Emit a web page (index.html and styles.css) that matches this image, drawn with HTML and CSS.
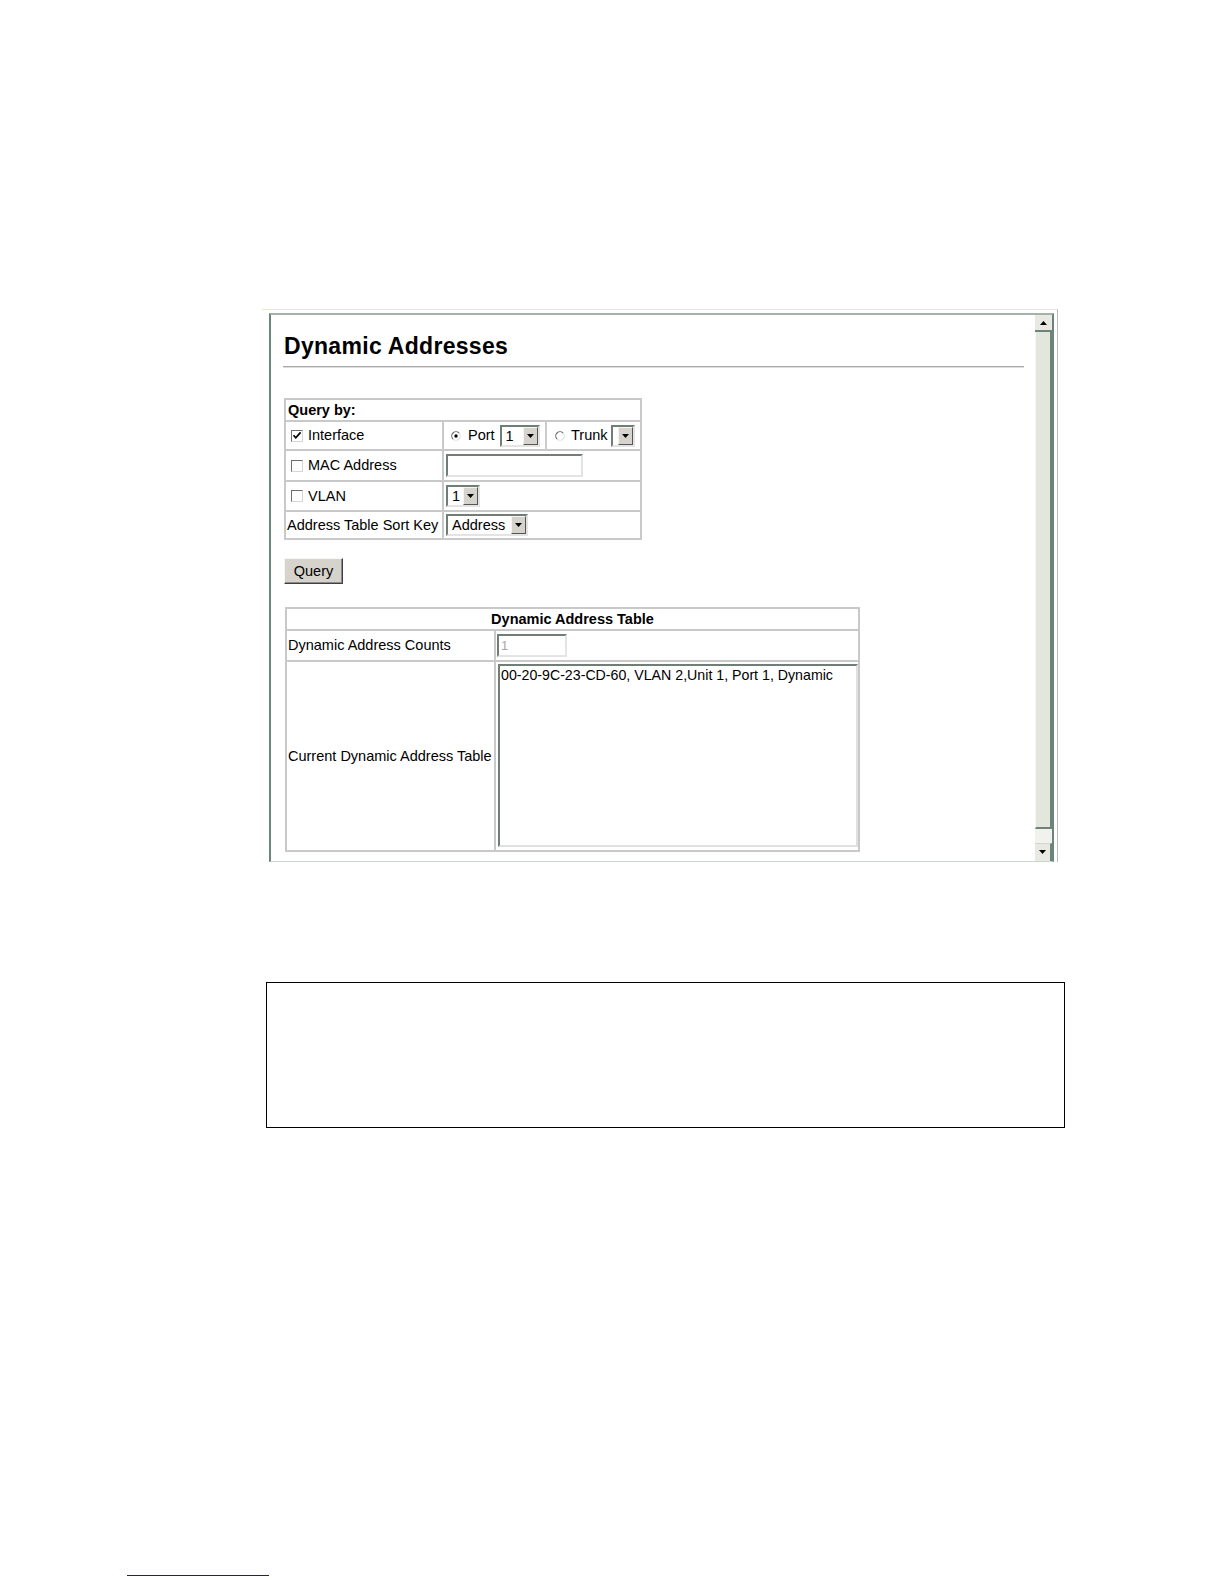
FILE: index.html
```html
<!DOCTYPE html>
<html>
<head>
<meta charset="utf-8">
<title>Dynamic Addresses</title>
<link rel="stylesheet" href="styles.css">
</head>
<body>
<div class="window">
  <div class="frame">
    <div class="content">
      <h1 class="title">Dynamic Addresses</h1>
      <div class="rule"></div>

      <table class="grid query">
        <colgroup><col class="q1"><col class="q2"></colgroup>
        <tr class="r-head"><td colspan="2" class="head-left">Query by:</td></tr>
        <tr class="r-int">
          <td><div class="lbl"><span class="cb"><svg width="10" height="10" viewBox="0 0 10 10"><path d="M1.5 4.2 L3.8 6.8 L8.6 1.4" stroke="#000" stroke-width="1.7" fill="none"/></svg></span>Interface</div></td>
          <td class="nest">
            <div class="split">
              <div class="part p1">
                <span class="rb"><svg width="10" height="10" viewBox="0 0 10 10"><circle cx="5" cy="5" r="4.2" fill="#fff"/><path d="M2 8 A4.2 4.2 0 0 1 8 2" stroke="#6a6a6a" stroke-width="1.1" fill="none"/><path d="M8 2 A4.2 4.2 0 0 1 2 8" stroke="#dedede" stroke-width="1.1" fill="none"/><circle cx="5" cy="5" r="1.7" fill="#000"/></svg></span>
                <span class="rtxt">Port</span>
                <span class="combo c-port"><span class="val">1</span><span class="arr"><svg width="7" height="4" viewBox="0 0 7 4"><path d="M0 0 H7 L3.5 4 Z" fill="#000"/></svg></span></span>
              </div>
              <div class="part p2">
                <span class="rb"><svg width="10" height="10" viewBox="0 0 10 10"><circle cx="5" cy="5" r="4.2" fill="#fff"/><path d="M2 8 A4.2 4.2 0 0 1 8 2" stroke="#6a6a6a" stroke-width="1.1" fill="none"/><path d="M8 2 A4.2 4.2 0 0 1 2 8" stroke="#dedede" stroke-width="1.1" fill="none"/></svg></span>
                <span class="rtxt r2">Trunk</span>
                <span class="combo c-trunk"><span class="val"></span><span class="arr"><svg width="7" height="4" viewBox="0 0 7 4"><path d="M0 0 H7 L3.5 4 Z" fill="#000"/></svg></span></span>
              </div>
            </div>
          </td>
        </tr>
        <tr class="r-mac">
          <td><div class="lbl"><span class="cb"></span>MAC Address</div></td>
          <td><span class="field f-mac"></span></td>
        </tr>
        <tr class="r-vlan">
          <td><div class="lbl"><span class="cb"></span>VLAN</div></td>
          <td><span class="combo c-vlan"><span class="val">1</span><span class="arr"><svg width="7" height="4" viewBox="0 0 7 4"><path d="M0 0 H7 L3.5 4 Z" fill="#000"/></svg></span></span></td>
        </tr>
        <tr class="r-sort">
          <td class="plain">Address Table Sort Key</td>
          <td><span class="combo c-addr"><span class="val">Address</span><span class="arr"><svg width="7" height="4" viewBox="0 0 7 4"><path d="M0 0 H7 L3.5 4 Z" fill="#000"/></svg></span></span></td>
        </tr>
      </table>

      <button class="btn" type="button">Query</button>

      <table class="grid dyn">
        <colgroup><col class="d1"><col class="d2"></colgroup>
        <tr class="d-head"><td colspan="2" class="head-center">Dynamic Address Table</td></tr>
        <tr class="d-count">
          <td class="plain">Dynamic Address Counts</td>
          <td><span class="field f-count">1</span></td>
        </tr>
        <tr class="d-list">
          <td class="plain">Current Dynamic Address Table</td>
          <td class="top"><div class="area">00-20-9C-23-CD-60, VLAN 2,Unit 1, Port 1, Dynamic</div></td>
        </tr>
      </table>
    </div>
    <div class="scrollbar">
      <div class="sb-btn sb-up"><svg width="7" height="4" viewBox="0 0 7 4"><path d="M0 4 H7 L3.5 0 Z" fill="#000"/></svg></div>
      <div class="sb-thumb"></div>
      <div class="sb-track"></div>
      <div class="sb-btn sb-down"><svg width="7" height="4" viewBox="0 0 7 4"><path d="M0 0 H7 L3.5 4 Z" fill="#000"/></svg></div>
    </div>
  </div>
</div>

<div class="note"></div>
<div class="footline"></div>
</body>
</html>
```

FILE: styles.css
```css
html, body {
  margin: 0;
  padding: 0;
  background: #ffffff;
}

body {
  font-family: "Liberation Sans", Arial, sans-serif;
  color: #000;
  font-size: 14.5px;
}

/* ---------- browser frame ---------- */
.window {
  margin: 309px 0 0 262px;
  width: 795px;
  border-top: 1px solid #e6ebc2;
  border-right: 1px solid #b4beb6;
}

.frame {
  margin: 3px 0 0 7px;
  width: 785px;
  height: 549px;
  box-sizing: border-box;
  border-top: 2px solid #a6b2a9;
  border-left: 2px solid #6b857a;
  border-right: 2px solid #6b857a;
  border-bottom: 1px solid #cdd3cd;
  display: flex;
}

.content {
  flex: 1;
  min-width: 0;
  padding: 19px 11px 0 12px;
  overflow: hidden;
}

.title {
  margin: 0;
  padding-left: 1px;
  font-size: 23px;
  line-height: 25px;
  font-weight: bold;
  letter-spacing: 0.3px;
}

.rule {
  margin-top: 7px;
  border-top: 1px solid #a9a9a9;
  border-bottom: 1px solid #dddddd;
}

/* ---------- tables ---------- */
.grid {
  border-collapse: separate;
  border-spacing: 0;
  border: 1px solid #c9c9c9;
  table-layout: fixed;
}

.grid td {
  border: 1px solid #c9c9c9;
  padding: 0;
  vertical-align: middle;
  white-space: nowrap;
  line-height: 17px;
}

.query {
  margin: 30px 0 0 1px;
  width: 358px;
}
.q1 { width: 158px; }
.q2 { width: 198px; }

.r-head { height: 22px; }
.r-int  { height: 29px; }
.r-mac  { height: 31px; }
.r-vlan { height: 30px; }
.r-sort { height: 28px; }

.head-left {
  font-weight: bold;
  padding-left: 2px !important;
}

.plain { padding-left: 1px !important; }

.lbl {
  display: flex;
  align-items: center;
}

.cb {
  display: inline-flex;
  align-items: center;
  justify-content: center;
  width: 12px;
  height: 12px;
  box-sizing: border-box;
  border: 1px solid;
  border-color: #6e6e6e #d6d6d6 #d6d6d6 #6e6e6e;
  background: #fff;
  margin: 0 5px 0 5px;
  flex: none;
}
.cb svg { display: block; }

.nest { padding: 0; }

.split {
  display: flex;
  height: 27px;
}

.part {
  display: flex;
  align-items: center;
}
.p1 { width: 101px; }
.p2 {
  flex: 1;
  border-left: 2px solid #cccccc;
}

.rb {
  display: inline-flex;
  margin-left: 7px;
}
.p2 .rb { margin-left: 8px; }
.rb svg { display: block; }

.rtxt { margin-left: 7px; }
.rtxt.r2 { margin-left: 6px; }

/* combo boxes */
.combo {
  display: inline-flex;
  height: 22px;
  box-sizing: border-box;
  border: 2px solid;
  border-color: #6f7f76 #e4e4e4 #e4e4e4 #6f7f76;
  background: #fff;
  vertical-align: middle;
  margin-left: 2px;
}
.combo .val {
  flex: 1;
  padding-left: 4px;
  line-height: 18px;
}
.combo .arr {
  width: 15px;
  box-sizing: border-box;
  background: #d6d3cc;
  border: 1px solid;
  border-color: #f4f4f4 #555 #555 #f4f4f4;
  display: flex;
  align-items: center;
  justify-content: center;
}
.combo .arr svg { display: block; }

.c-port  { width: 40px; margin-left: 5px; }
.c-trunk { width: 24px; margin-left: 3px; }
.c-vlan  { width: 34px; }
.c-addr  { width: 82px; }

/* text fields */
.field {
  display: inline-block;
  height: 23px;
  box-sizing: border-box;
  border: 2px solid;
  border-color: #6f7f76 #e4e4e4 #e4e4e4 #6f7f76;
  background: #fff;
  vertical-align: middle;
  margin-left: 2px;
}
.f-mac { width: 137px; }
.f-count {
  width: 70px;
  margin-left: 1px;
  color: #a8a8a8;
  font-size: 13px;
  line-height: 19px;
  padding-left: 2px;
}

/* button */
.btn {
  display: block;
  margin: 18px 0 0 1px;
  width: 59px;
  height: 26px;
  padding: 0;
  font-family: "Liberation Sans", Arial, sans-serif;
  font-size: 14.5px;
  color: #000;
  background: #d6d3cc;
  border: 1px solid;
  border-color: #f6f6f6 #404040 #404040 #f6f6f6;
  box-shadow: inset -1px -1px 0 #8a8a8a;
}

/* dynamic table */
.dyn {
  margin: 23px 0 0 2px;
  width: 575px;
}
.d1 { width: 209px; }
.d2 { width: 364px; }

.d-head  { height: 22px; }
.d-count { height: 31px; }
.d-list  { height: 190px; }

.head-center {
  font-weight: bold;
  text-align: center;
}

.grid td.top { vertical-align: top; }

.area {
  margin: 2px 0 0 2px;
  width: 360px;
  height: 183px;
  box-sizing: border-box;
  border: 2px solid;
  border-color: #6f7f76 #e0e0e0 #e0e0e0 #6f7f76;
  font-size: 14.2px;
  line-height: 17px;
  padding: 1px 0 0 1px;
}

/* scrollbar */
.scrollbar {
  width: 17px;
  flex: none;
  display: flex;
  flex-direction: column;
  background: #eef0ea;
}
.sb-btn {
  display: flex;
  align-items: center;
  justify-content: center;
  box-sizing: border-box;
  background: #e7e9e2;
}
.sb-btn svg { display: block; }
.sb-up {
  height: 17px;
  border-bottom: 2px solid #6f8478;
}
.sb-thumb {
  height: 497px;
  box-sizing: border-box;
  background: #e3e6dd;
  border-right: 2px solid #6f8478;
  border-bottom: 2px solid #6f8478;
  border-left: 1px solid #f7f7f4;
}
.sb-track {
  height: 14px;
  background: #f1f2ee;
}
.sb-down {
  height: 18px;
  border-right: 2px solid #6f8478;
  border-top: 1px solid #cfd5cf;
  padding-bottom: 2px;
}

/* empty note box */
.note {
  margin: 120px 0 0 266px;
  width: 799px;
  height: 146px;
  box-sizing: border-box;
  border: 1px solid #000;
}

.footline {
  margin: 447px 0 0 127px;
  width: 142px;
  height: 1px;
  background: #1b1b8a;
}
```
